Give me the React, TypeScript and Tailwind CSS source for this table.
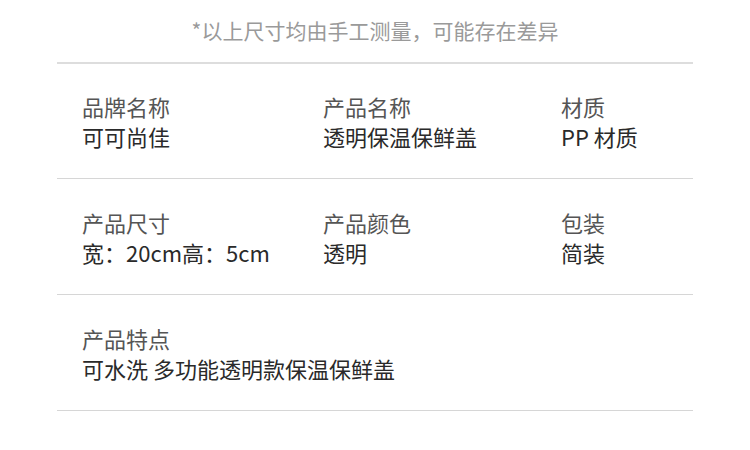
const rows = [
  [
    { label: "品牌名称", value: "可可尚佳" },
    { label: "产品名称", value: "透明保温保鲜盖" },
    { label: "材质", value: "PP 材质" },
  ],
  [
    { label: "产品尺寸", value: "宽：20cm高：5cm" },
    { label: "产品颜色", value: "透明" },
    { label: "包装", value: "简装" },
  ],
];

export default function App() {
  return (
    <main
      className="h-[450px] w-[750px] overflow-hidden bg-white"
      style={{ fontFamily: '"Noto Sans CJK SC", "Noto Sans", sans-serif' }}
    >
      <p className="pt-[15px] text-center text-[21px] leading-[30px] text-[#9a9a9a]">
        *以上尺寸均由手工测量，可能存在差异
      </p>

      <div className="mx-[57px] mt-[17px] border-t-2 border-[#dddddd]">
        {rows.map((row, i) => (
          <div
            key={i}
            className={
              i === 0
                ? "grid grid-cols-[241px_238px_1fr] border-b border-[#d6d6d6] pt-[27px] pb-[27px] pl-[25px] text-[22px] leading-[30px]"
                : "grid grid-cols-[241px_238px_1fr] border-b border-[#d6d6d6] pt-[28px] pb-[27px] pl-[25px] text-[22px] leading-[30px]"
            }
          >
            {row.map((cell) => (
              <div key={cell.label}>
                <div className="text-[#555555]">{cell.label}</div>
                <div className="text-[#2a2a2a]">{cell.value}</div>
              </div>
            ))}
          </div>
        ))}

        <div className="border-b border-[#d6d6d6] pt-[28px] pb-[27px] pl-[25px] text-[22px] leading-[30px]">
          <div className="text-[#555555]">产品特点</div>
          <div className="text-[#2a2a2a]">可水洗 多功能透明款保温保鲜盖</div>
        </div>
      </div>
    </main>
  );
}
